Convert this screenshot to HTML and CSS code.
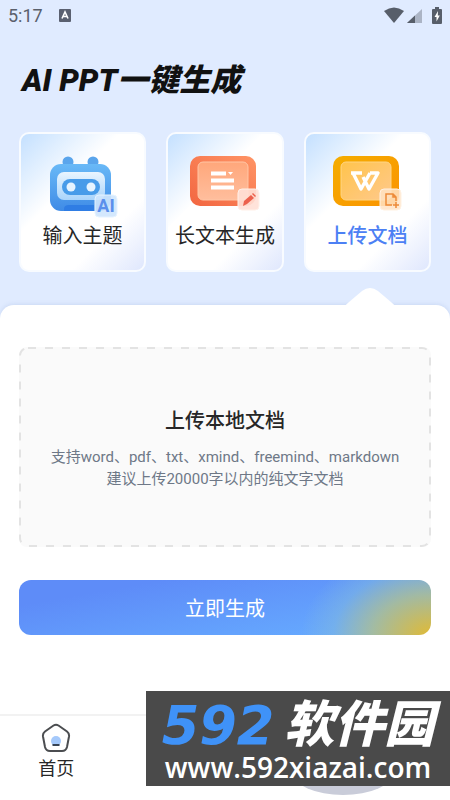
FILE: index.html
```
<!DOCTYPE html>
<html lang="zh-CN">
<head>
    <meta charset="UTF-8">
    <meta name="viewport" content="width=device-width, initial-scale=1.0">
    <title>AI PPT一键生成</title>
    <link rel="stylesheet" href="styles.css">
</head>
<body>
    <div class="status-bar">
        <span class="clock">5:17</span>
        <svg class="app-icon" width="12" height="13" viewBox="0 0 12 13">
            <rect width="12" height="13" rx="1" fill="#5a6070"/>
            <path d="M3 9.5L6 3L9 9.5M4 7.5H8" fill="none" stroke="#fff" stroke-width="1.6"/>
        </svg>
        <div class="status-icons">
            <svg width="20" height="16" viewBox="0 0 20 16">
                <path d="M0 4Q10 -3 20 4L10 16Z" fill="#575e6a"/>
            </svg>
            <svg width="16" height="16" viewBox="0 0 16 16">
                <path d="M0 16L15 2V16Z" fill="#abb4c5"/>
                <path d="M0 16L8 8.5V16Z" fill="#575e6a"/>
            </svg>
            <svg class="battery" width="10" height="17" viewBox="0 0 10 17">
                <path d="M3 0H7V2H9Q10 2 10 3V16Q10 17 9 17H1Q0 17 0 16V3Q0 2 1 2H3Z" fill="#575e6a"/>
                <path d="M6 4L2.500 10H4.500V14.500L7.800 8.500H5.800Z" fill="#fff"/>
            </svg>
        </div>
    </div>

    <h1>AI PPT一键生成</h1>

    <div class="cards">
        <button class="card" type="button">
            <svg width="70" height="64" viewBox="0 0 70 64">
                <defs>
                    <linearGradient id="blue" x1="0" y1="0" x2="0" y2="1">
                        <stop offset="0" stop-color="#69b9f7"/>
                        <stop offset="1" stop-color="#3f8be6"/>
                    </linearGradient>
                    <linearGradient id="face" x1="0" y1="0" x2="0" y2="1">
                        <stop offset="0" stop-color="#e9f5ff"/>
                        <stop offset="1" stop-color="#a9d4fb"/>
                    </linearGradient>
                </defs>
                <circle cx="20" cy="6" r="5.500" fill="#5aa5ec"/>
                <circle cx="45" cy="6" r="5.500" fill="#5aa5ec"/>
                <rect x="2" y="8" width="61" height="47" rx="11" fill="url(#blue)"/>
                <rect x="9" y="16" width="48" height="28" rx="7" fill="url(#face)"/>
                <rect x="14" y="23" width="38" height="16" rx="8" fill="#479be9"/>
                <circle cx="23" cy="31" r="4.500" fill="#e5f3ff"/>
                <circle cx="43" cy="31" r="4.500" fill="#e5f3ff"/>
                <path d="M16 55V53Q16 49 21 49H46V55Z" fill="#2f7de4"/>
                <rect x="47" y="39" width="22" height="22" rx="4" fill="#cfe6fd" fill-opacity="0.900" stroke="#e6f3ff"/>
                <text class="badge-text" x="58" y="56" text-anchor="middle">AI</text>
            </svg>
            <span>输入主题</span>
        </button>
        <button class="card" type="button">
            <svg width="70" height="64" viewBox="0 0 70 64">
                <defs>
                    <linearGradient id="orange" x1="0" y1="1" x2="1" y2="0">
                        <stop offset="0" stop-color="#f26641"/>
                        <stop offset="1" stop-color="#ff9465"/>
                    </linearGradient>
                    <linearGradient id="peach" x1="0" y1="0" x2="0" y2="1">
                        <stop offset="0" stop-color="#ffa77b"/>
                        <stop offset="1" stop-color="#ffbe9d"/>
                    </linearGradient>
                </defs>
                <rect x="0" y="0" width="66" height="50" rx="10" fill="url(#orange)"/>
                <rect x="8" y="6" width="50" height="38" rx="5" fill="url(#peach)" stroke="#ffc6a6"/>
                <path d="M21 17.500H36M21 24.500H44M21 31.500H44" stroke="#fff" stroke-width="4"/>
                <path d="M38 16H43L40.500 19Z" fill="#fff"/>
                <rect x="48" y="33" width="21" height="21" rx="4" fill="#ffe0d6" fill-opacity="0.900" stroke="#fff0e8"/>
                <path d="M53 50L54 45L61 39L64 42L57 48Z" fill="#ec604c"/>
                <path d="M62 38L63 37L66 40L65 41Z" fill="#ec604c"/>
            </svg>
            <span>长文本生成</span>
        </button>
        <button class="card active" type="button">
            <svg width="70" height="64" viewBox="0 0 70 64">
                <defs>
                    <linearGradient id="gold" x1="0" y1="0" x2="1" y2="1">
                        <stop offset="0" stop-color="#f4ad00"/>
                        <stop offset="1" stop-color="#fb9300"/>
                    </linearGradient>
                    <linearGradient id="sand" x1="0" y1="0" x2="1" y2="1">
                        <stop offset="0" stop-color="#ffc44c"/>
                        <stop offset="1" stop-color="#ffc98c"/>
                    </linearGradient>
                </defs>
                <rect x="1" y="0" width="66" height="50" rx="10" fill="url(#gold)"/>
                <rect x="9" y="6" width="50" height="38" rx="5" fill="url(#sand)" stroke="#ffd583"/>
                <path d="M19 17H30M21 17L29 33L38 17M31 21L37 33L46 17H38" fill="none" stroke="#fff" stroke-width="3.400" stroke-linejoin="round"/>
                <rect x="48" y="33" width="21" height="21" rx="4" fill="#ffe3c6" fill-opacity="0.850" stroke="#fff1e2"/>
                <path d="M60 49H54V38H61L64 41V45M61 38V41H64" fill="none" stroke="#ed8a38" stroke-width="1.500"/>
                <path d="M61 49H67M64 46V52" stroke="#ed8a38" stroke-width="1.500"/>
            </svg>
            <span>上传文档</span>
        </button>
    </div>

    <main class="sheet">
        <svg class="notch" width="54" height="20" viewBox="0 0 54 20">
            <path d="M0 20Q3 18 6 15L19 4Q27 -2 35 4L48 15Q51 18 54 20Z" fill="#fff"/>
        </svg>
        <label class="dropzone">
            <svg class="dash" width="100%" height="100%">
                <rect x="1" y="1" width="100%" height="100%" rx="8"/>
            </svg>
            <input class="file-input" type="file">
            <strong>上传本地文档</strong>
            <span>支持word、pdf、txt、xmind、freemind、markdown<br>建议上传20000字以内的纯文字文档</span>
        </label>
        <button class="generate-btn" type="button">立即生成</button>
    </main>

    <nav class="tab-bar">
        <a class="tab" href="#">
            <svg width="30" height="30" viewBox="0 0 30 30">
                <path d="M12.500 2.500Q15 1 17.500 2.500L26 8.500Q28.500 10.500 28 13.500L26 24Q25 28 21 28H9Q5 28 4 24L2 13.500Q1.500 10.500 4 8.500Z" fill="#fff" stroke="#4b4d50" stroke-width="2"/>
                <circle cx="15" cy="18" r="5" fill="#a5c9fb"/>
                <path d="M11.500 22H18.500" stroke="#374354" stroke-width="2"/>
            </svg>
            <span>首页</span>
        </a>
        <div class="bubble"></div>
    </nav>

    <div class="watermark">
        <div class="brand"><b>592</b><span>软件园</span></div>
        <div class="site">www.592xiazai.com</div>
    </div>
</body>
</html>
```
FILE: styles.css
```
* {
    margin: 0;
    padding: 0;
    box-sizing: border-box;
}

body {
    font-family: Roboto, "Noto Sans CJK SC", sans-serif;
    background-color: #e0ebff;
    color: #272727;
    min-height: 100vh;
    display: flex;
    flex-direction: column;
    position: relative;
    overflow-x: hidden;
}

button {
    font-family: inherit;
    border: none;
    cursor: pointer;
}

.status-bar {
    display: flex;
    align-items: center;
    height: 30px;
    padding: 0 8px;
    color: #5a606c;
}

.clock {
    font-size: 18px;
}

.app-icon {
    margin-left: 16px;
}

.status-icons {
    display: flex;
    align-items: center;
    gap: 3px;
    margin-left: auto;
}

.battery {
    margin-left: 6px;
}

h1 {
    padding: 0 22px;
    margin-top: 27px;
    font-size: 31px;
    line-height: 48px;
    font-weight: 900;
    font-style: italic;
    color: #111;
}

/* mode cards */
.cards {
    display: grid;
    grid-template-columns: 14fr 13fr 14fr;
    gap: 20px;
    padding: 0 19px;
    margin-top: 27px;
}

.card {
    display: flex;
    flex-direction: column;
    align-items: center;
    height: 140px;
    padding-top: 22px;
    border: 2px solid #f8fbff;
    border-radius: 10px;
    background: linear-gradient(135deg, #c4e0ff 0%, #fff 38%, #fff 72%, #dfe7fd 100%);
    font-size: 20px;
    line-height: 32px;
    color: #272727;
}

.card span {
    white-space: nowrap;
}

.card.active {
    color: #4c80f4;
    font-weight: 500;
}

.badge-text {
    font-family: Roboto, sans-serif;
    font-size: 18px;
    font-weight: 700;
    fill: #5b8fec;
}

/* white sheet */
.sheet {
    position: relative;
    flex: 1;
    margin-top: 33px;
    padding: 42px 19px 32px;
    background-color: #fff;
    border-radius: 14px 14px 0 0;
    box-shadow: 0 -1px 4px rgba(90, 120, 180, 0.15);
}

.notch {
    position: absolute;
    top: -18px;
    right: 53px;
}

.dropzone {
    position: relative;
    display: flex;
    flex-direction: column;
    align-items: center;
    justify-content: center;
    gap: 10px;
    height: 200px;
    padding-top: 2px;
    border-radius: 8px;
    background-color: #fafafa;
    text-align: center;
    cursor: pointer;
}

.dash {
    position: absolute;
    top: 0;
    left: 0;
    padding: 0 2px 2px 0;
    overflow: visible;
}

.dash rect {
    fill: none;
    stroke: #e3e3e3;
    stroke-width: 2;
    stroke-dasharray: 8 9;
}

.file-input {
    position: absolute;
    width: 1px;
    height: 1px;
    opacity: 0;
}

.dropzone strong {
    font-size: 20px;
    line-height: 30px;
    font-weight: 500;
}

.dropzone span {
    font-size: 15px;
    line-height: 22px;
    color: #6e7887;
}

.generate-btn {
    display: block;
    width: 100%;
    height: 55px;
    margin-top: 33px;
    border-radius: 12px;
    background:
        radial-gradient(ellipse 130px 90px at 100% 100%, #e0ba35 0%, rgba(178, 192, 140, 0.8) 45%, rgba(130, 185, 220, 0.5) 75%, rgba(100, 170, 255, 0) 100%),
        linear-gradient(170deg, #5e8cf8 20%, #66abff 90%);
    color: #fff;
    font-size: 20px;
}

/* bottom tabs */
.tab-bar {
    position: relative;
    display: flex;
    height: 86px;
    border-top: 2px solid #f2f2f2;
    background-color: #fff;
    overflow: hidden;
}

.tab {
    display: flex;
    flex-direction: column;
    align-items: center;
    width: 25%;
    padding-top: 7px;
    color: #272727;
    text-decoration: none;
    font-size: 18px;
    line-height: 32px;
}

.bubble {
    position: absolute;
    right: 57px;
    bottom: 5px;
    width: 100px;
    height: 44px;
    border-radius: 50%;
    background-color: #c9ccd9;
}

.watermark {
    position: absolute;
    right: 0;
    bottom: 14px;
    width: 304px;
    height: 95px;
    padding-top: 12px;
    background-color: #4a4a4a;
    color: #fff;
    text-align: center;
    white-space: nowrap;
}

.brand {
    display: flex;
    justify-content: center;
    align-items: center;
    gap: 10px;
    height: 50px;
    font-style: italic;
}

.brand span {
    padding-bottom: 6px;
    font-size: 50px;
    line-height: 40px;
    font-weight: 900;
}

.brand b {
    padding-bottom: 4px;
    font-family: "DejaVu Sans", sans-serif;
    font-size: 54px;
    line-height: 40px;
    color: #3f92f8;
}

.site {
    font-family: "Open Sans", sans-serif;
    font-size: 28px;
    line-height: 28px;
    font-weight: 600;
}
```
